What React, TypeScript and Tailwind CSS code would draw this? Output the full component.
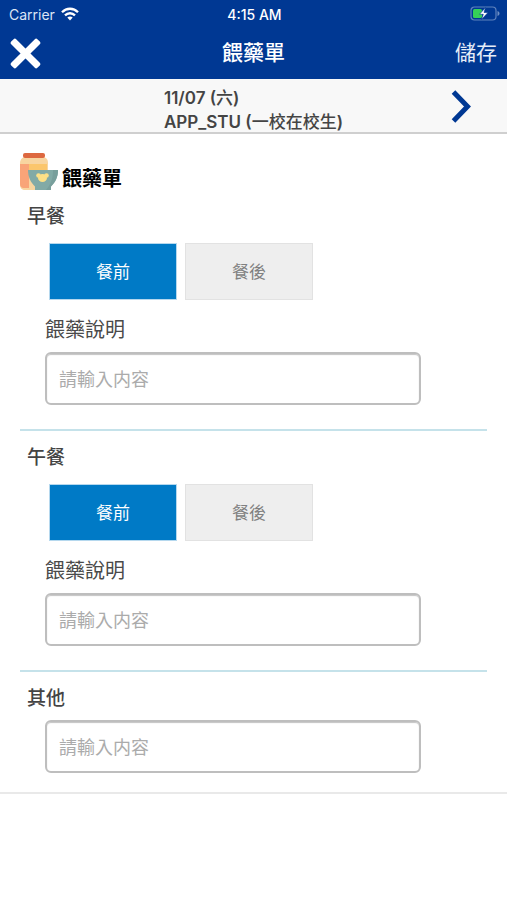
import React, { useState } from 'react';

type Timing = 'before' | 'after';

interface MealSectionProps {
  id: string;
  title: string;
}

const NoteInput: React.FC<{ id: string; label?: string }> = ({ id, label }) => (
  <input
    id={id}
    type="text"
    aria-label={label}
    placeholder="請輸入内容"
    className="block w-full h-[53px] px-3 pt-[2px] rounded-md border-2 border-[#bebebe] bg-white text-[18px] text-[#444] placeholder:text-[#ababab] shadow-[inset_0_1px_1px_#c4c4c4] focus:outline-none focus:border-[#007ac6]"
  />
);

const MealSection: React.FC<MealSectionProps> = ({ id, title }) => {
  const [timing, setTiming] = useState<Timing>('before');

  const options: { value: Timing; label: string }[] = [
    { value: 'before', label: '餐前' },
    { value: 'after', label: '餐後' },
  ];

  return (
    <section className="pb-6 mb-[11px] border-b-2 border-[#c5e2ea]">
      <h3 className="ml-[7px] text-[19px] leading-8 font-medium text-[#444]">{title}</h3>
      <div className="flex gap-2 mt-[10px] ml-[29px]">
        {options.map(o => (
          <button
            key={o.value}
            type="button"
            aria-pressed={timing === o.value}
            onClick={() => setTiming(o.value)}
            className={`w-32 h-[57px] pt-[2px] border text-[17px] ${
              timing === o.value
                ? 'bg-[#007ac6] border-[#b5d8ee] text-white'
                : 'bg-[#eeeeee] border-[#e2e2e2] text-[#808080]'
            }`}
          >
            {o.label}
          </button>
        ))}
      </div>
      <div className="mt-[15px] ml-[25px] mr-[66px]">
        <label htmlFor={id} className="block mb-[7px] text-[20px] leading-[30px] text-[#4a4a4a]">
          餵藥說明
        </label>
        <NoteInput id={id} />
      </div>
    </section>
  );
};

const MedicineIcon = () => (
  <svg viewBox="0 0 38 39" className="w-[38px] h-[39px] shrink-0" aria-hidden="true">
    <path d="M4 5h20c3 1 4 3 4 6v22c0 3-1.500 5-4 5H5c-3 0-5-2-5-5V11c0-3 1.500-5 4-6z" fill="#f8d5a0" />
    <path d="M9 12h18v13H9z" fill="#fbc66c" />
    <path d="M0 12h9v24H3c-2-.5-3-2-3-4z" fill="#f9a478" />
    <rect x="3" y="1" width="22" height="5" rx="2" fill="#dd6840" />
    <path d="M8 18h30c0 7-2.500 12-7 16.500V38H15v-3.500C10.500 30 8 25 8 18z" fill="#82aaa6" />
    <path d="M33 18h5c0 7-2.500 12-7 16.500V38h-5c4.500-5 7-11 7-20z" fill="#789f9c" />
    <circle cx="18.500" cy="23.500" r="2.300" fill="#fce087" />
    <circle cx="26.500" cy="23.500" r="2.300" fill="#fce087" />
    <ellipse cx="22.500" cy="26" rx="4.500" ry="4" fill="#fce087" />
  </svg>
);

const StatusBar = () => (
  <div className="grid grid-cols-3 items-center h-7 pl-[9px] pr-[7px] text-[14px]">
    <div className="flex items-center gap-[6px] text-[#dce5f5]">
      <span>Carrier</span>
      <svg viewBox="0 0 18 14" className="w-[18px] h-[14px]" fill="none" stroke="white" strokeWidth="2.300" aria-hidden="true">
        <path d="M1 5.200C5.500.6 12.500.6 17 5.200" />
        <path d="M4 8.400c2.900-2.900 7.100-2.900 10 0" />
        <path d="M6.300 10.600c1.600-1.400 3.800-1.400 5.400 0L9 13.500z" fill="white" stroke="none" />
      </svg>
    </div>
    <span className="text-center font-medium">4:15 AM</span>
    <svg viewBox="0 0 30 16" className="w-[30px] h-4 justify-self-end" aria-hidden="true">
      <rect x="1" y="1" width="25" height="13" rx="3.500" fill="none" stroke="#5f83bd" strokeWidth="1.200" />
      <rect x="3" y="3" width="9" height="9" rx="1.500" fill="#35d058" />
      <path d="M27.500 5v5c1.300-.5 2-1.400 2-2.500s-.7-2-2-2.500z" fill="#6d8fc4" />
      <path d="M15.500 1.500 9.500 8.300h3.800L11.500 13.500l6.500-7h-4z" fill="white" stroke="#003893" strokeWidth=".6" />
    </svg>
  </div>
);

const App: React.FC = () => {
  return (
    <div className="min-h-screen bg-white font-[Inter,'Noto_Sans_CJK_TC',sans-serif]">
      <header className="bg-[#003893] text-white">
        <StatusBar />
        <div className="grid grid-cols-3 items-center h-[51px] px-[10px]">
          <button type="button" aria-label="關閉" className="justify-self-start">
            <svg viewBox="0 0 31 31" className="w-[31px] h-[31px]" fill="white" aria-hidden="true">
              <rect x="-3" y="12" width="37" height="7" rx="1.800" transform="rotate(45 15.500 15.500)" />
              <rect x="-3" y="12" width="37" height="7" rx="1.800" transform="rotate(-45 15.500 15.500)" />
            </svg>
          </button>
          <h1 className="text-center text-[21px] leading-7 pb-[2px] font-medium">餵藥單</h1>
          <button type="button" className="justify-self-end text-[21px] leading-7 pb-[2px] text-[#e6edf8]">
            儲存
          </button>
        </div>
      </header>

      <div className="flex items-center justify-center relative h-[55px] pt-[9px] bg-[#f8f8f8] border-b-2 border-[#cfcfcf]">
        <p className="text-[17px] leading-6 font-semibold text-[#444]">
          11/07 (<span className="font-medium">六</span>)
          <br />
          APP_STU (<span className="font-medium">一校在校生</span>)
        </p>
        <button type="button" aria-label="下一位" className="absolute right-9 top-[11px]">
          <svg viewBox="0 0 20 33" className="w-5 h-[33px]" fill="none" stroke="#003893" strokeWidth="5" aria-hidden="true">
            <path d="M2.500 2l14 14.500-14 14.500" />
          </svg>
        </button>
      </div>

      <main className="px-5 pt-[18px] pb-[19px] border-b-2 border-[#e9e9e9]">
        <div className="flex items-end gap-1 mb-[10px]">
          <MedicineIcon />
          <h2 className="text-[20px] leading-6 font-bold text-black">餵藥單</h2>
        </div>
        <MealSection id="breakfast-note" title="早餐" />
        <MealSection id="lunch-note" title="午餐" />
        <section>
          <h3 className="ml-[7px] mb-[5px] text-[19px] leading-8 font-medium text-[#444]">其他</h3>
          <div className="ml-[25px] mr-[66px]">
            <NoteInput id="other-note" label="其他" />
          </div>
        </section>
      </main>
    </div>
  );
};

export default App;
